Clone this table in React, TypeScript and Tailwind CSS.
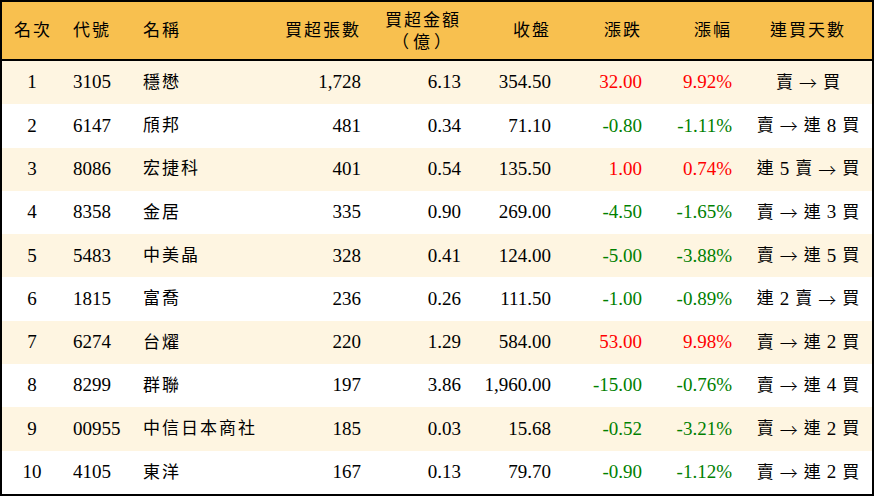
const rows = [
  { rank: '1', code: '3105', name: '穩懋', vol: '1,728', amt: '6.13', close: '354.50', chg: '32.00', pct: '9.92%', streak: ['賣', '→', '買'] },
  { rank: '2', code: '6147', name: '頎邦', vol: '481', amt: '0.34', close: '71.10', chg: '-0.80', pct: '-1.11%', streak: ['賣', '→', '連', '8', '買'] },
  { rank: '3', code: '8086', name: '宏捷科', vol: '401', amt: '0.54', close: '135.50', chg: '1.00', pct: '0.74%', streak: ['連', '5', '賣', '→', '買'] },
  { rank: '4', code: '8358', name: '金居', vol: '335', amt: '0.90', close: '269.00', chg: '-4.50', pct: '-1.65%', streak: ['賣', '→', '連', '3', '買'] },
  { rank: '5', code: '5483', name: '中美晶', vol: '328', amt: '0.41', close: '124.00', chg: '-5.00', pct: '-3.88%', streak: ['賣', '→', '連', '5', '買'] },
  { rank: '6', code: '1815', name: '富喬', vol: '236', amt: '0.26', close: '111.50', chg: '-1.00', pct: '-0.89%', streak: ['連', '2', '賣', '→', '買'] },
  { rank: '7', code: '6274', name: '台燿', vol: '220', amt: '1.29', close: '584.00', chg: '53.00', pct: '9.98%', streak: ['賣', '→', '連', '2', '買'] },
  { rank: '8', code: '8299', name: '群聯', vol: '197', amt: '3.86', close: '1,960.00', chg: '-15.00', pct: '-0.76%', streak: ['賣', '→', '連', '4', '買'] },
  { rank: '9', code: '00955', name: '中信日本商社', vol: '185', amt: '0.03', close: '15.68', chg: '-0.52', pct: '-3.21%', streak: ['賣', '→', '連', '2', '買'] },
  { rank: '10', code: '4105', name: '東洋', vol: '167', amt: '0.13', close: '79.70', chg: '-0.90', pct: '-1.12%', streak: ['賣', '→', '連', '2', '買'] },
];

const grid = 'grid grid-cols-[60px_70px_138px_91px_100px_90px_91px_90px_140px] items-center';

function Streak({ parts }: { parts: string[] }) {
  return (
    <div className="flex justify-center items-center gap-[6px] pl-[12px] whitespace-nowrap">
      {parts.map((p, i) =>
        p === '→' ? (
          <span key={i} className="font-['Noto_Sans_CJK_TC',sans-serif] text-[18px] font-light">→</span>
        ) : /\d/.test(p) ? (
          <span key={i}>{p}</span>
        ) : (
          <span key={i} className="text-[17px]">{p}</span>
        )
      )}
    </div>
  );
}

export default function App() {
  return (
    <div className="w-[874px] h-[496px] border-2 border-black flex flex-col bg-white text-black font-['Liberation_Serif','Noto_Sans_CJK_TC',serif] text-[19px]">
      <div className={`${grid} h-[59px] shrink-0 bg-[#F8C04F] border-b-2 border-black text-[17px] tracking-[2px] leading-[19px]`}>
        <div className="text-center pl-[2px]">名次</div>
        <div className="pl-[11px]">代號</div>
        <div className="pl-[11px]">名稱</div>
        <div className="text-right">買超張數</div>
        <div className="text-right flex flex-col items-end gap-[3px]">
          <div className="h-[17px] leading-[17px]">買超金額</div>
          <div className="h-[17px] leading-[17px] pr-[6px] font-['Noto_Sans_CJK_TC',sans-serif] tracking-[4px]">（億）</div>
        </div>
        <div className="text-right">收盤</div>
        <div className="text-right">漲跌</div>
        <div className="text-right">漲幅</div>
        <div className="text-center pl-[12px]">連買天數</div>
      </div>
      {rows.map((r, i) => {
        const up = !r.chg.startsWith('-');
        const color = up ? 'text-[#FF0000]' : 'text-[#008000]';
        return (
          <div key={r.rank} className={`${grid} flex-1 ${i % 2 === 0 ? 'bg-[#FEF5E1]' : 'bg-white'}`}>
            <div className="text-center">{r.rank}</div>
            <div className="pl-[11px]">{r.code}</div>
            <div className="pl-[11px] text-[17px] tracking-[2px]">{r.name}</div>
            <div className="text-right">{r.vol}</div>
            <div className="text-right">{r.amt}</div>
            <div className="text-right">{r.close}</div>
            <div className={`text-right ${color}`}>{r.chg}</div>
            <div className={`text-right ${color}`}>{r.pct}</div>
            <Streak parts={r.streak} />
          </div>
        );
      })}
    </div>
  );
}
